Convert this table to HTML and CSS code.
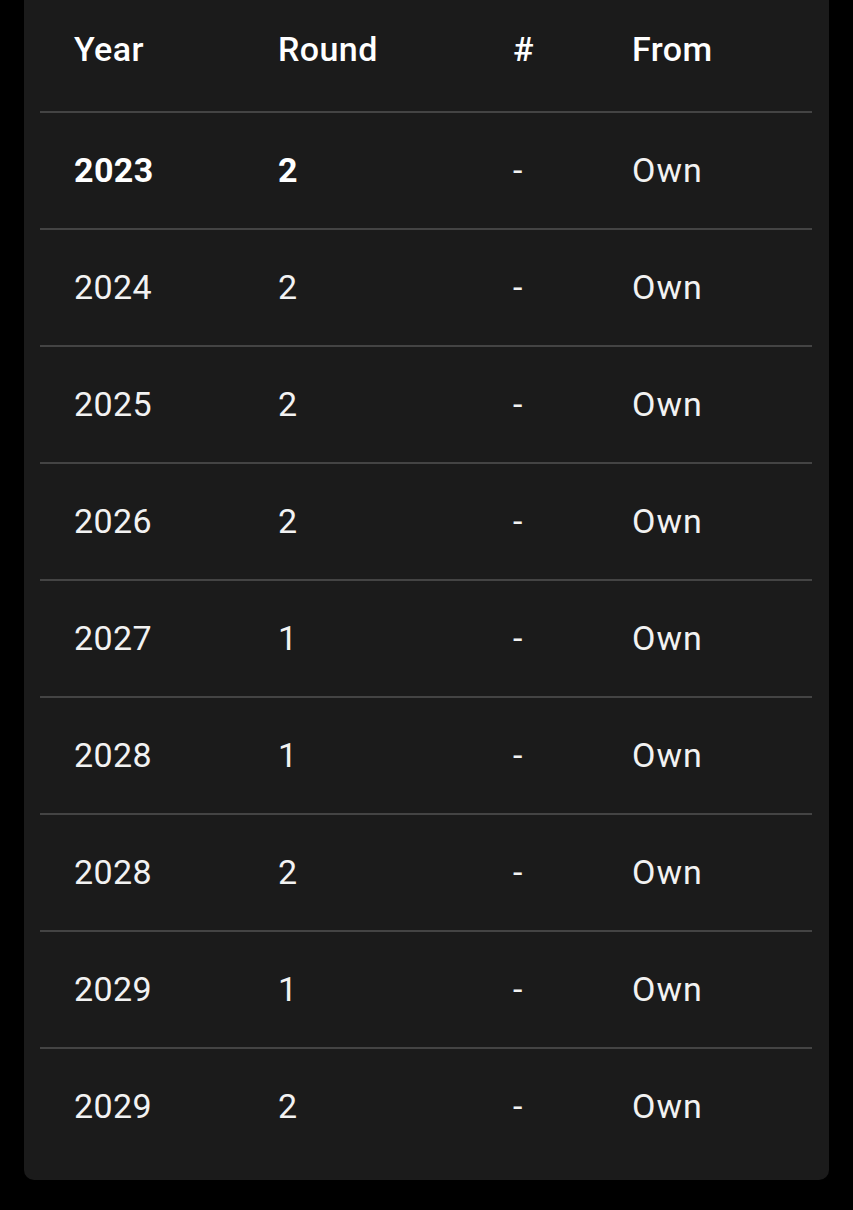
FILE: index.html
```html
<!DOCTYPE html>
<html lang="en">
<head>
<meta charset="utf-8">
<title>Draft picks</title>
<link rel="stylesheet" href="styles.css">
</head>
<body>
<div class="card">
  <table class="picks">
    <colgroup>
      <col class="c-year">
      <col class="c-round">
      <col class="c-num">
      <col class="c-from">
    </colgroup>
    <thead>
      <tr><th>Year</th><th>Round</th><th>#</th><th>From</th></tr>
    </thead>
    <tbody>
      <tr class="current"><td class="strong">2023</td><td class="strong">2</td><td>-</td><td class="from">Own</td></tr>
      <tr><td>2024</td><td>2</td><td>-</td><td class="from">Own</td></tr>
      <tr><td>2025</td><td>2</td><td>-</td><td class="from">Own</td></tr>
      <tr><td>2026</td><td>2</td><td>-</td><td class="from">Own</td></tr>
      <tr><td>2027</td><td>1</td><td>-</td><td class="from">Own</td></tr>
      <tr><td>2028</td><td>1</td><td>-</td><td class="from">Own</td></tr>
      <tr><td>2028</td><td>2</td><td>-</td><td class="from">Own</td></tr>
      <tr><td>2029</td><td>1</td><td>-</td><td class="from">Own</td></tr>
      <tr><td>2029</td><td>2</td><td>-</td><td class="from">Own</td></tr>
    </tbody>
  </table>
</div>
</body>
</html>
```

FILE: styles.css
```css
html, body {
  margin: 0;
  padding: 0;
  background: #000;
}

body {
  font-family: Roboto, "Noto Sans", "Liberation Sans", sans-serif;
  color: #fff;
}

.card {
  margin: -13px 24px 0;
  padding: 0 16px 16px;
  background: #1b1b1b;
  border-radius: 0 0 10px 10px;
}

.picks {
  width: 772px;
  border-collapse: collapse;
  table-layout: fixed;
}

.c-year { width: 204px; }
.c-round { width: 235px; }
.c-num { width: 119px; }
.c-from { width: 214px; }

.picks th,
.picks td {
  padding: 0 0 0 34px;
  text-align: left;
  vertical-align: middle;
  font-size: 34px;
  line-height: 40px;
  letter-spacing: 0.4px;
  border-bottom: 2px solid #444;
}

.picks th {
  height: 124px;
  font-weight: 500;
  color: #fff;
}

.picks td {
  height: 113px;
  padding-bottom: 2px;
  font-weight: 400;
  color: #f2f2f2;
}

.picks tbody tr:last-child td {
  border-bottom: none;
}

.picks td.strong {
  font-weight: 700;
  color: #fff;
}

.picks td.from {
  letter-spacing: 1px;
}
```
